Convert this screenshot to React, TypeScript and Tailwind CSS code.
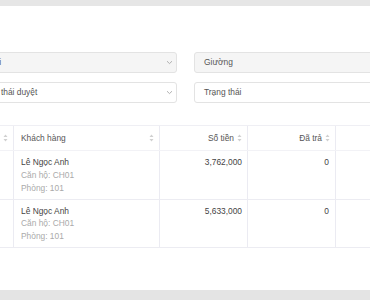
import React from "react";

function Chevron() {
  return (
    <svg width="7" height="5" viewBox="0 0 7 5" className="shrink-0">
      <path d="M1 1.2 L3.5 3.6 L6 1.2" fill="none" stroke="#a8a8a8" strokeWidth="0.9" />
    </svg>
  );
}

function Sort() {
  return (
    <svg width="5" height="8" viewBox="0 0 5 8" className="shrink-0">
      <path d="M2.5 0.5 L4.5 3 L0.5 3 Z" fill="#d0d0d0" />
      <path d="M2.5 7.5 L4.5 5 L0.5 5 Z" fill="#d0d0d0" />
    </svg>
  );
}

const rows = [
  { name: "Lê Ngọc Anh", apt: "Căn hộ: CH01", room: "Phòng: 101", amount: "3,762,000", paid: "0" },
  { name: "Lê Ngọc Anh", apt: "Căn hộ: CH01", room: "Phòng: 101", amount: "5,633,000", paid: "0" },
];

export default function App() {
  return (
    <div className="w-[370px] h-[300px] overflow-hidden bg-white flex flex-col font-['Liberation_Sans',Arial,sans-serif] text-[8.4px] leading-[12.8px]">
      <div className="h-[6px] shrink-0 bg-[#e6e6e6]" />
      <div className="flex-1 min-h-0">
        <div className="-ml-[33px] w-[460px] pt-[46px]">
          <div className="grid grid-cols-[210px_200px] gap-x-[17px] gap-y-[9px]">
            <div className="h-[21px] rounded-[3px] border border-[#e3e3e3] bg-[#f5f5f5] flex items-center justify-between pl-[9px] pr-[3px] text-[#555]">
              <span>Kỳ gửi</span>
              <Chevron />
            </div>
            <div className="h-[21px] rounded-[3px] border border-[#e3e3e3] bg-[#f5f5f5] flex items-center pl-[9px] text-[#555]">
              <span>Giường</span>
            </div>
            <div className="h-[21px] rounded-[3px] border border-[#e3e3e3] bg-white flex items-center justify-between pl-[9px] pr-[3px] text-[#555]">
              <span>Trạng thái duyệt</span>
              <Chevron />
            </div>
            <div className="h-[21px] rounded-[3px] border border-[#e3e3e3] bg-white flex items-center pl-[9px] text-[#555]">
              <span>Trạng thái</span>
            </div>
          </div>

          <div className="mt-[22px] border-t border-[#efeff4]">
            <div className="flex h-[25px] border-b border-[#f2f2f6] text-[#555]">
              <div className="w-[47px] border-r border-[#ebebf2] flex items-center justify-end pr-[5px]">
                <Sort />
              </div>
              <div className="w-[146px] border-r border-[#ebebf2] flex items-center justify-between pl-[7px] pr-[5px]">
                <span>Khách hàng</span>
                <Sort />
              </div>
              <div className="w-[88px] border-r border-[#ebebf2] flex items-center justify-end gap-[3px] pr-[5px]">
                <span>Số tiền</span>
                <Sort />
              </div>
              <div className="w-[88px] border-r border-[#ebebf2] flex items-center justify-end gap-[3px] pr-[5px]">
                <span>Đã trả</span>
                <Sort />
              </div>
              <div className="flex-1" />
            </div>
            {rows.map((r, i) => (
              <div key={i} className="flex h-[48.5px] border-b border-[#ececf2] text-[#444]">
                <div className="w-[47px] border-r border-[#ebebf2]" />
                <div className="w-[146px] border-r border-[#ebebf2] pl-[7px] pt-[5px]">
                  <div>{r.name}</div>
                  <div className="text-[#aaa]">{r.apt}</div>
                  <div className="text-[#aaa]">{r.room}</div>
                </div>
                <div className="w-[88px] border-r border-[#ebebf2] pt-[5px] pr-[5px] text-right">{r.amount}</div>
                <div className="w-[88px] border-r border-[#ebebf2] pt-[5px] pr-[6px] text-right">{r.paid}</div>
                <div className="flex-1" />
              </div>
            ))}
          </div>
        </div>
      </div>
      <div className="h-[10px] shrink-0 bg-[#e4e4e4]" />
    </div>
  );
}
